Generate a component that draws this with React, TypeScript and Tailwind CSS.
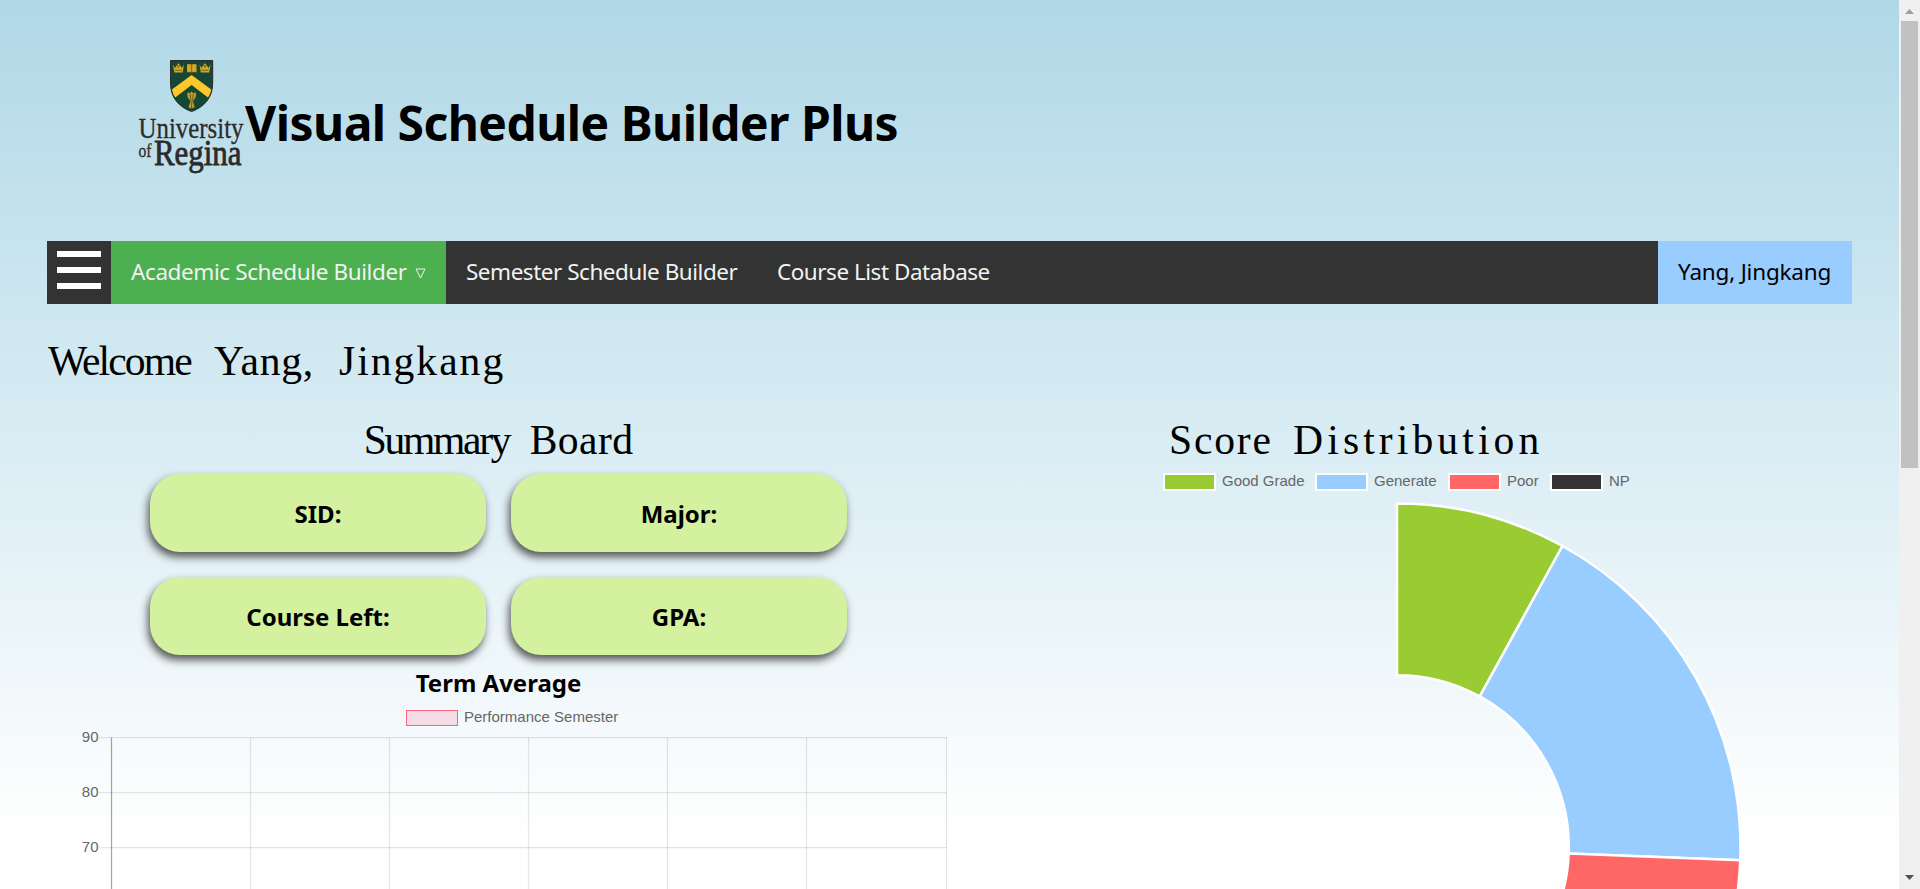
const sans = "font-['Noto_Sans','Open_Sans',sans-serif]";
const serif = "font-['Liberation_Serif',serif] text-[41.6px] leading-[50px] whitespace-nowrap";
const arial = "font-['Liberation_Sans',sans-serif]";

function Crown({ x }: { x: number }) {
  return (
    <g transform={`translate(${x} 63.5)`}>
      <path d="M0 1 L2 4.5 L4 1.5 L5.5 4.5 L7 1.5 L9 4.5 L11 1 L9.7 9 H1.3 Z" fill="#d9a520" />
      <path d="M5.5 0 V3 M4.3 1.2 H6.7" stroke="#d9a520" strokeWidth="1" />
      <path d="M2 6.8 H9" stroke="#154734" strokeWidth=".6" />
    </g>
  );
}

function Logo() {
  return (
    <svg width="106" height="114" viewBox="138 59 106 114" className="block shrink-0 overflow-visible">
      <path d="M170.5 60.5 H212.7 V83 C212.7 98 204 107 191.6 111.6 C179 107 170.5 98 170.5 83 Z" fill="#154734" stroke="#2b2b2b" strokeWidth="1" />
      <Crown x={173} />
      <Crown x={199.5} />
      <path d="M187 64.500 Q189.500 63.300 191.600 64.800 Q194 63.300 196.500 64.500 V72 H187 Z" fill="#d9a520" />
      <path d="M191.600 65 V72 M186.500 72.400 H197" stroke="#6b5a18" strokeWidth=".8" />
      <path d="M191.600 75 L211.300 89.500 Q210.500 94 208 97.500 L191.600 85 L175.200 97.500 Q172.700 94 171.900 89.500 Z" fill="#ffc72c" />
      <path d="M188 92 Q186 96 189.300 99.500 L190.300 102 L188.500 107 Q191.600 109.500 194.700 107 L193 102 L194 99.500 Q197.300 96 195.300 92 L193.500 93.500 L191.600 91.500 L189.800 93.500 Z" fill="#c99a22" />
      <path d="M190 94 L191 101 M193.300 94 L192.300 101 M188.500 102 H194.800 M191.600 103 V108" stroke="#154734" strokeWidth=".6" />
      <g fill="#2b2b2b" stroke="#2b2b2b" strokeWidth=".3" fontFamily="Liberation Serif, serif">
        <text x="138.500" y="137.500" fontSize="29" textLength="105" lengthAdjust="spacingAndGlyphs">University</text>
        <text x="138.500" y="157" fontSize="18" textLength="13" lengthAdjust="spacingAndGlyphs">of</text>
        <text x="154" y="165" fontSize="35" strokeWidth=".8" textLength="87.500" lengthAdjust="spacingAndGlyphs">Regina</text>
      </g>
    </svg>
  );
}

function Card({ label }: { label: string }) {
  return (
    <div className="flex h-[78px] w-[336px] items-center justify-center rounded-[30px] bg-[#d4f1a0] pt-px text-[24px] font-bold shadow-[-2px_5px_8px_#555]">
      {label}
    </div>
  );
}

const columns = [250.5, 389.5, 528.5, 667.5, 806.5, 946.5];
const ticks = [
  { value: 90, y: 737.5 },
  { value: 80, y: 792.5 },
  { value: 70, y: 847.5 },
];

function TermChart() {
  return (
    <svg width="900" height="160" viewBox="47 729 900 160" className="block">
      <g stroke="#000" strokeWidth="1.25">
        {ticks.map((t) => (
          <line key={t.value} x1="99" x2="947" y1={t.y} y2={t.y} strokeOpacity=".1" />
        ))}
        {columns.map((x) => (
          <line key={x} x1={x} x2={x} y1="737.5" y2="889" strokeOpacity=".1" />
        ))}
        <line x1="111.500" x2="111.500" y1="737.5" y2="889" strokeOpacity=".35" />
      </g>
      <g fill="#666" fontFamily="Liberation Sans, sans-serif" fontSize="15">
        {ticks.map((t) => (
          <text key={t.value} x="98.500" y={t.y + 4.5} textAnchor="end">
            {t.value}
          </text>
        ))}
      </g>
    </svg>
  );
}

const CX = 1397;
const CY = 847;

function slice(from: number, to: number) {
  const at = (deg: number, r: number) => {
    const a = (deg * Math.PI) / 180;
    return `${CX + r * Math.sin(a)} ${CY - r * Math.cos(a)}`;
  };
  return `M${at(from, 343.5)} A343.5 343.5 0 0 1 ${at(to, 343.5)} L${at(to, 171.8)} A171.8 171.8 0 0 0 ${at(from, 171.8)} Z`;
}

function Donut() {
  return (
    <svg width="700" height="389" viewBox="1047 500 700 389" className="block">
      <g stroke="#fff" strokeWidth="2.5">
        <path d={slice(0, 28.8)} fill="#9c3" />
        <path d={slice(28.8, 92.2)} fill="#9cf" />
        <path d={slice(92.2, 140)} fill="#f66" />
      </g>
    </svg>
  );
}

function Key({ swatch, label, width }: { swatch: string; label: string; width: string }) {
  return (
    <div className={`flex shrink-0 ${width}`}>
      <span className={`mr-[6px] h-[18px] w-[53px] shrink-0 border-[2.5px] border-white ${swatch}`} />
      <span className="leading-[15px]">{label}</span>
    </div>
  );
}

export default function App() {
  return (
    <div className={`flex h-[889px] w-full overflow-hidden bg-white text-black ${sans}`}>
      <main className="h-full w-[1899px] shrink-0 bg-[linear-gradient(#b0d8e7_0px,#ffffff_840px)] pl-[47px]">
        <header className="flex h-[241px] pl-[91px] pt-[59px]">
          <Logo />
          <h1 className="ml-px mt-[32px] whitespace-nowrap text-[48px] leading-[64px] font-bold tracking-[-0.550px]">
            Visual Schedule Builder Plus
          </h1>
        </header>

        <nav className="flex h-[63px] w-[1805px] bg-[#333] text-[22.500px] leading-[62px] tracking-[-0.480px] whitespace-nowrap text-[#f2f2f2]">
          <div className="flex w-[64px] flex-col gap-[10px] pl-[10px] pt-[10px]">
            <i className="h-[6px] w-[44px] bg-white" />
            <i className="h-[6px] w-[44px] bg-white" />
            <i className="h-[6px] w-[44px] bg-white" />
          </div>
          <div className="flex w-[335px] bg-[#4caf50] pl-[20px]">
            <span className="tracking-[-0.400px]">Academic Schedule Builder</span>
            <svg width="11" height="11" viewBox="0 0 11 11" className="ml-[8px] mt-[27px]">
              <path d="M1 1 H10 L5.500 10 Z" fill="none" stroke="#f2f2f2" />
            </svg>
          </div>
          <span className="w-[311px] pl-[20px]">Semester Schedule Builder</span>
          <span className="pl-[20px]">Course List Database</span>
          <span className="ml-auto w-[194px] bg-[#9cf] pl-[20px] tracking-[-0.200px] text-black">Yang, Jingkang</span>
        </nav>

        <h2 className={`mt-[32px] flex pl-px ${serif}`}>
          <span className="w-[166px] tracking-[-1.900px]">Welcome </span>
          <span className="w-[125px] tracking-[0.700px]">Yang, </span>
          <span className="tracking-[2px]">Jingkang</span>
        </h2>

        <div className="mt-[29px] flex">
          <section className="w-[903px] shrink-0">
            <h2 className={`text-center [word-spacing:10px] ${serif}`}>
              <span className="tracking-[-2.300px]">Summary</span> <span className="tracking-[0.400px]">Board</span>
            </h2>
            <div className="ml-[103px] mt-[9px] grid w-[697px] grid-cols-2 gap-[25px]">
              <Card label="SID:" />
              <Card label="Major:" />
              <Card label="Course Left:" />
              <Card label="GPA:" />
            </div>
            <h3 className="mt-[11px] text-center text-[24px] leading-[34px] font-bold">Term Average</h3>
            <div className={`mt-[9px] flex h-[20px] pl-[359px] text-[15px] text-[#666] ${arial}`}>
              <span className="mr-[6px] mt-px h-[16px] w-[52px] border-[1.500px] border-[#ff6384] bg-[#ff6384]/20" />
              <span className="leading-[15px]">Performance Semester</span>
            </div>
            <TermChart />
          </section>

          <section className="ml-[97px]">
            <h2 className={`pl-[122px] [word-spacing:10px] ${serif}`}>
              <span className="tracking-[1.800px]">Score</span> <span className="tracking-[4.100px]">Distribution</span>
            </h2>
            <div className={`mt-[8px] flex h-[27px] pl-[116px] text-[15px] text-[#666] ${arial}`}>
              <Key swatch="bg-[#9c3]" label="Good Grade" width="w-[152px]" />
              <Key swatch="bg-[#9cf]" label="Generate" width="w-[133px]" />
              <Key swatch="bg-[#f66]" label="Poor" width="w-[102px]" />
              <Key swatch="bg-[#333]" label="NP" width="w-[90px]" />
            </div>
            <Donut />
          </section>
        </div>
      </main>

      <aside className="flex h-full w-[21px] shrink-0 flex-col items-center bg-[#f0f0f0]">
        <svg width="9" height="5" className="mt-[9px] shrink-0" viewBox="0 0 9 5">
          <path d="M0 5 L4.500 0 L9 5 Z" fill="#a0a0a0" />
        </svg>
        <div className="mt-[7px] h-[447px] w-[17px] shrink-0 bg-[#c1c1c1]" />
        <svg width="9" height="5" className="mt-auto mb-[9px] shrink-0" viewBox="0 0 9 5">
          <path d="M0 0 L4.500 5 L9 0 Z" fill="#505050" />
        </svg>
      </aside>
    </div>
  );
}
